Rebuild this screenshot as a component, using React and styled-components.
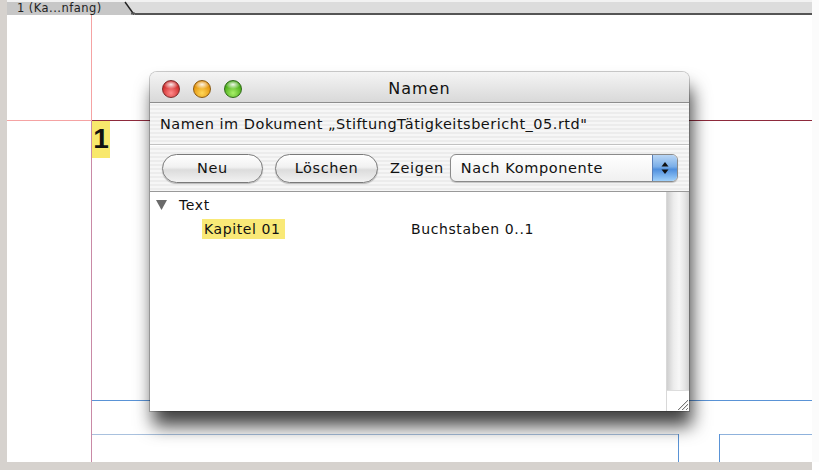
import React from 'react';
import styled, { createGlobalStyle } from 'styled-components';

const Global = createGlobalStyle`
  html, body { margin: 0; padding: 0; background: #fff; }
  body { font-family: "DejaVu Sans", "Liberation Sans", sans-serif; }
`;

const Screen = styled.div`
  width: 819px;
  height: 470px;
  display: flex;
  flex-direction: column;
  overflow: hidden;
  background: #fff;
`;

const Top = styled.div`
  flex: 1;
  display: flex;
`;

const SideStrip = styled.div`
  width: 7px;
  background: #d6d2ce;
`;

const RightStrip = styled.div`
  width: 7px;
  background: #fbfbfb;
`;

const BottomStrip = styled.div`
  height: 8px;
  background: #d6d2ce;
  margin-right: 7px;
`;

const Main = styled.div`
  flex: 1;
  display: flex;
  flex-direction: column;
`;

const TabBar = styled.div`
  height: 15px;
  display: flex;
  background: linear-gradient(#f2f2f2 0, #f2f2f2 2px, #dcdcdc 2px);
`;

const Tab = styled.div`
  width: 116px;
  padding-left: 10px;
  box-sizing: border-box;
  background: linear-gradient(#f2f2f2 0, #f2f2f2 2px, #c7c7c7 2px);
  font-size: 11.5px;
  letter-spacing: 0.45px;
  line-height: 16px;
  color: #222;
  white-space: nowrap;
`;

const TabSlash = styled.svg`
  width: 12px;
  height: 15px;
  display: block;
`;

const TabRest = styled.div`
  flex: 1;
  border-bottom: 2px solid #555;
`;

const Canvas = styled.div`
  flex: 1;
  position: relative;
`;

const Guide = styled.div`
  position: absolute;
  background: ${p => p.color};
`;

const PageNumber = styled.div`
  position: absolute;
  left: 85px;
  top: 106px;
  width: 18px;
  height: 37px;
  background: #f8e86c;
  font-family: "Liberation Sans", Arial, sans-serif;
  font-weight: bold;
  font-size: 28px;
  line-height: 36px;
  text-align: center;
  color: #111;
`;

const Window = styled.div`
  position: absolute;
  left: 143px;
  top: 57px;
  width: 539px;
  height: 339px;
  display: flex;
  flex-direction: column;
  border-radius: 7px 7px 0 0;
  background: repeating-linear-gradient(#ececec 0, #ececec 2px, #f6f6f6 2px, #f6f6f6 4px);
  box-shadow: 0 0 0 1px rgba(0,0,0,0.2), 3px 15px 18px rgba(0,0,0,0.75);
  overflow: hidden;
`;

const TitleBar = styled.div`
  height: 31px;
  flex-shrink: 0;
  position: relative;
  display: flex;
  align-items: center;
  justify-content: center;
  padding-top: 3px;
  box-sizing: border-box;
  background: linear-gradient(#f4f4f4, #d9d9d9);
  border-bottom: 1px solid #8d8d8d;
  font-size: 16px;
  letter-spacing: 1px;
  color: #111;
`;

const Lights = styled.div`
  position: absolute;
  left: 12px;
  top: 8px;
  display: flex;
  gap: 13px;
`;

const Light = styled.div`
  width: 18px;
  height: 18px;
  border-radius: 50%;
  box-sizing: border-box;
  border: 1px solid ${p => p.edge};
  background:
    radial-gradient(ellipse 60% 35% at 50% 22%, rgba(255,255,255,0.9), rgba(255,255,255,0) 80%),
    radial-gradient(circle at 50% 75%, ${p => p.light}, ${p => p.dark} 75%);
`;

const InfoRow = styled.div`
  height: 41px;
  flex-shrink: 0;
  display: flex;
  align-items: center;
  padding-left: 10px;
  font-size: 14.5px;
  letter-spacing: 0.5px;
  color: #111;
  border-bottom: 1px solid #c2c2c2;
  box-shadow: 0 1px 0 #fff;
`;

const Toolbar = styled.div`
  height: 47px;
  flex-shrink: 0;
  display: flex;
  align-items: center;
  padding: 0 11px 0 12px;
  box-sizing: border-box;
  border-bottom: 1px solid #999;
`;

const PillButton = styled.button`
  width: ${p => p.w}px;
  height: 29px;
  margin-right: ${p => p.gap}px;
  border-radius: 15px;
  border: 1px solid #7a7a7a;
  background: linear-gradient(#ffffff 0%, #f1f1f1 45%, #dcdcdc 55%, #f2f2f2 100%);
  box-shadow: 0 1px 1px rgba(0,0,0,0.25);
  font-family: "DejaVu Sans", sans-serif;
  font-size: 14.5px;
  letter-spacing: 0.6px;
  color: #111;
  padding: 0 0 1px;
`;

const Label = styled.span`
  font-size: 14.5px;
  letter-spacing: 0.6px;
  color: #111;
  margin-right: 6px;
`;

const Select = styled.div`
  width: 228px;
  height: 28px;
  box-sizing: border-box;
  display: flex;
  border: 1px solid #8a8a8a;
  border-radius: 6px;
  background: linear-gradient(#ffffff, #f0f0f0);
  box-shadow: 0 1px 1px rgba(0,0,0,0.2);
  overflow: hidden;
`;

const SelectValue = styled.div`
  flex: 1;
  padding-left: 10px;
  font-size: 14.5px;
  letter-spacing: 0.6px;
  line-height: 26px;
  color: #111;
`;

const Stepper = styled.div`
  width: 24px;
  display: flex;
  align-items: center;
  justify-content: center;
  border-left: 1px solid #5a7fb8;
  background: linear-gradient(#b9d6f5 0%, #7aaee8 45%, #4f8fdd 55%, #9fd0fb 100%);
`;

const ListArea = styled.div`
  flex: 1;
  display: flex;
  background: #fff;
`;

const List = styled.div`
  flex: 1;
  padding-top: 3px;
  font-size: 14px;
  letter-spacing: 0.6px;
  color: #111;
`;

const Row = styled.div`
  height: ${p => p.h}px;
  display: flex;
  align-items: center;
  padding-left: ${p => p.indent}px;
`;

const Disclosure = styled.svg`
  width: 11px;
  height: 10px;
  margin-right: 12px;
`;

const Highlight = styled.span`
  width: 83px;
  height: 20px;
  line-height: 20px;
  padding-left: 2px;
  box-sizing: border-box;
  background: #f9e977;
  white-space: nowrap;
`;

const Cell = styled.span`
  margin-left: ${p => p.offset}px;
`;

const Scrollbar = styled.div`
  width: 22px;
  display: flex;
  flex-direction: column;
  border-left: 1px solid #d8d8d8;
  background: linear-gradient(90deg, #cfcfcf 0%, #ececec 30%, #f7f7f7 55%, #e6e6e6 80%, #d2d2d2 100%);
`;

const Track = styled.div`
  flex: 1;
`;

const Grip = styled.div`
  height: 20px;
  background: #fff;
  border-top: 1px solid #ddd;
  display: flex;
  align-items: flex-end;
  justify-content: flex-end;
`;

const lights = [
  { light: '#ff8c8c', dark: '#c81c1c', edge: '#7d2a2a' },
  { light: '#ffd85a', dark: '#e08a00', edge: '#8a5a10' },
  { light: '#a8f06a', dark: '#3da20c', edge: '#2f6a18' },
];

const App = () => {
  return (
    <Screen>
      <Global />
      <Top>
        <SideStrip />
        <Main>
          <TabBar>
            <Tab>1 (Ka...nfang)</Tab>
            <TabSlash viewBox="0 0 12 15">
              <rect x="0" y="0" width="12" height="2" fill="#f2f2f2" />
              <path d="M0 2 L3 2 L12 15 L0 15 Z" fill="#c7c7c7" />
              <path d="M2 2 L11 14.5" stroke="#222" strokeWidth="1.4" />
              <path d="M8 13.5 L12 13.5" stroke="#555" strokeWidth="2" />
            </TabSlash>
            <TabRest />
          </TabBar>
          <Canvas>
            <Guide color="#f5a3a3" style={{ left: 0, top: 105, width: 84, height: 1 }} />
            <Guide color="#8e2a3c" style={{ left: 85, top: 105, width: 720, height: 1 }} />
            <Guide color="#f5a3a3" style={{ left: 84, top: 0, width: 1, height: 106 }} />
            <Guide color="#c98aa6" style={{ left: 84, top: 106, width: 1, height: 341 }} />
            <Guide color="#5a93d6" style={{ left: 85, top: 385, width: 720, height: 1 }} />
            <Guide color="#a9c1de" style={{ left: 85, top: 419, width: 587, height: 1 }} />
            <Guide color="#5a93d6" style={{ left: 671, top: 419, width: 1, height: 28 }} />
            <Guide color="#8fb2dc" style={{ left: 712, top: 419, width: 93, height: 1 }} />
            <Guide color="#5a93d6" style={{ left: 712, top: 419, width: 1, height: 28 }} />
            <PageNumber>1</PageNumber>

            <Window>
              <TitleBar>
                <Lights>
                  {lights.map((l, i) => (
                    <Light key={i} light={l.light} dark={l.dark} edge={l.edge} />
                  ))}
                </Lights>
                Namen
              </TitleBar>
              <InfoRow>Namen im Dokument „StiftungTätigkeitsbericht_05.rtd"</InfoRow>
              <Toolbar>
                <PillButton w={101} gap={12}>Neu</PillButton>
                <PillButton w={103} gap={12}>Löschen</PillButton>
                <Label>Zeigen</Label>
                <Select>
                  <SelectValue>Nach Komponente</SelectValue>
                  <Stepper>
                    <svg width="8" height="14" viewBox="0 0 8 14">
                      <path d="M4 1 L7.5 5.5 L0.5 5.5 Z" fill="#111" />
                      <path d="M4 13 L7.5 8.5 L0.5 8.5 Z" fill="#111" />
                    </svg>
                  </Stepper>
                </Select>
              </Toolbar>
              <ListArea>
                <List>
                  <Row h={20} indent={6}>
                    <Disclosure viewBox="0 0 11 10">
                      <path d="M0 0 L11 0 L5.5 10 Z" fill="#6a6a6a" />
                    </Disclosure>
                    Text
                  </Row>
                  <Row h={27} indent={52}>
                    <Highlight>Kapitel 01</Highlight>
                    <Cell offset={126}>Buchstaben 0..1</Cell>
                  </Row>
                </List>
                <Scrollbar>
                  <Track />
                  <Grip>
                    <svg width="16" height="16" viewBox="0 0 16 16">
                      <path d="M15 5 L5 15 M15 9 L9 15 M15 13 L13 15" stroke="#777" strokeWidth="1" />
                      <path d="M15 6 L6 15 M15 10 L10 15" stroke="#ddd" strokeWidth="1" />
                    </svg>
                  </Grip>
                </Scrollbar>
              </ListArea>
            </Window>
          </Canvas>
        </Main>
        <RightStrip />
      </Top>
      <BottomStrip />
    </Screen>
  );
};

export default App;
